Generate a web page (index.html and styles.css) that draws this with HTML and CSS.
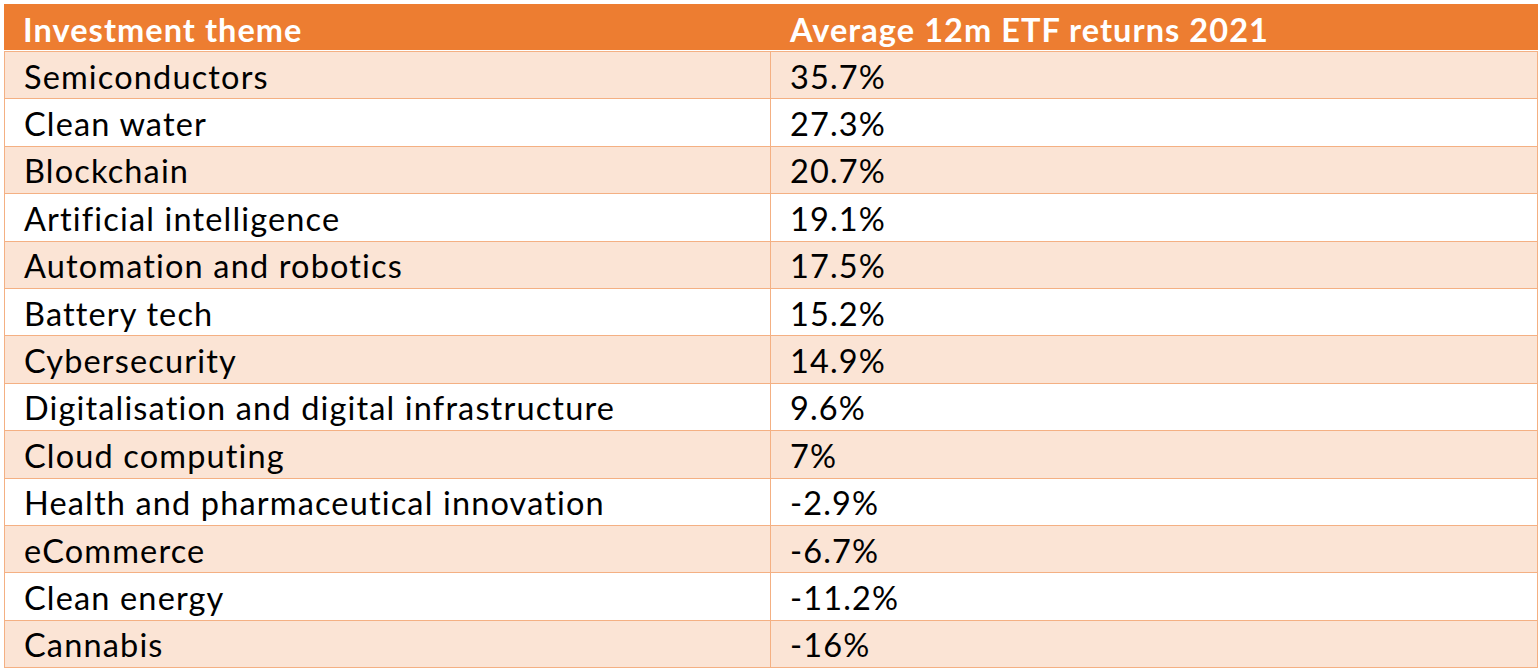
FILE: index.html
```html
<!DOCTYPE html>
<html lang="en">
<head>
<meta charset="utf-8">
<title>Average 12m ETF returns 2021 by investment theme</title>
<link rel="stylesheet" href="styles.css">
</head>
<body>
<div class="sheet">
  <div class="row head">
    <div class="cell">Investment theme</div>
    <div class="cell">Average 12m ETF returns 2021</div>
  </div>
  <div class="body">
    <div class="row band"><div class="cell">Semiconductors</div><div class="cell">35.7%</div></div>
    <div class="row"><div class="cell">Clean water</div><div class="cell">27.3%</div></div>
    <div class="row band"><div class="cell">Blockchain</div><div class="cell">20.7%</div></div>
    <div class="row"><div class="cell">Artificial intelligence</div><div class="cell">19.1%</div></div>
    <div class="row band"><div class="cell">Automation and robotics</div><div class="cell">17.5%</div></div>
    <div class="row"><div class="cell">Battery tech</div><div class="cell">15.2%</div></div>
    <div class="row band"><div class="cell">Cybersecurity</div><div class="cell">14.9%</div></div>
    <div class="row"><div class="cell">Digitalisation and digital infrastructure</div><div class="cell">9.6%</div></div>
    <div class="row band"><div class="cell">Cloud computing</div><div class="cell">7%</div></div>
    <div class="row"><div class="cell">Health and pharmaceutical innovation</div><div class="cell">-2.9%</div></div>
    <div class="row band"><div class="cell">eCommerce</div><div class="cell">-6.7%</div></div>
    <div class="row"><div class="cell">Clean energy</div><div class="cell">-11.2%</div></div>
    <div class="row band"><div class="cell">Cannabis</div><div class="cell">-16%</div></div>
  </div>
</div>
</body>
</html>
```

FILE: styles.css
```css
html, body {
  margin: 0;
  padding: 0;
  background: #ffffff;
}

body {
  padding: 4px 2px 0 4px;
  font-family: Lato, "Open Sans", sans-serif;
  font-size: 32.5px;
  letter-spacing: 1.15px;
  font-variant-ligatures: none;
  color: #000000;
  overflow: hidden;
}

.sheet {
  width: 1534px;
}

.row {
  display: grid;
  grid-template-columns: 767px 767px;
  height: 47.4px;
  box-sizing: border-box;
}

.cell {
  display: flex;
  align-items: center;
  padding-left: 19px;
  padding-top: 2px;
  white-space: nowrap;
}

.head {
  height: 47px;
  background: #ed7d31;
  border-bottom: 1px solid #ffffff;
  color: #ffffff;
  font-weight: 700;
  letter-spacing: 1.05px;
}

.head .cell {
  padding-top: 4px;
}

.body .row {
  border-left: 1px solid #f4b083;
  border-right: 1px solid #f4b083;
  border-bottom: 1px solid #f4b083;
  grid-template-columns: 766px 766px;
}

.body .row:first-child {
  border-top: 1px solid #f4b083;
  height: 48.4px;
}

.body .row .cell:first-child {
  border-right: 1px solid #f4b083;
}

.band {
  background: #fbe4d5;
}
```
